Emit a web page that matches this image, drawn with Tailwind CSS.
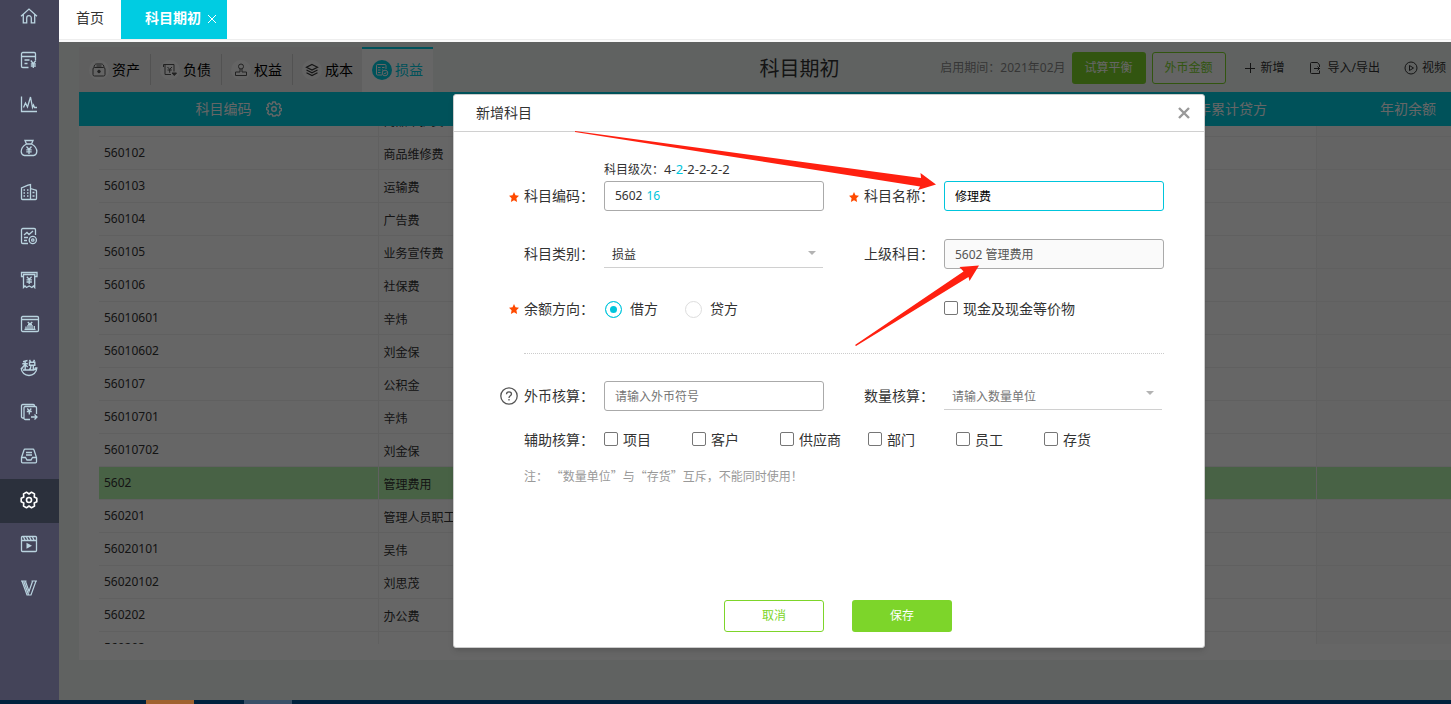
<!DOCTYPE html>
<html lang="zh-CN">
<head>
  <meta charset="UTF-8">
  <meta name="viewport" content="width=device-width, initial-scale=1.0">
  <title>科目期初</title>
  <script src="https://cdn.jsdelivr.net/npm/@tailwindcss/browser@4"></script>
</head>
<body class="h-screen flex flex-col overflow-hidden font-['Noto_Sans','Noto_Sans_CJK_SC',sans-serif] text-xs text-[#333]">
  <div class="flex flex-1 min-h-0">

    <!-- Sidebar -->
    <nav class="w-[59px] shrink-0 bg-[#444459] text-[#b9d3df] overflow-hidden">
      <a href="#" aria-label="首页" class="flex h-[39px] pb-2 pr-px items-center justify-center">
        <svg class="size-[18px]" viewBox="0 0 18 18" fill="none" stroke="currentColor" stroke-width="1.3"><path d="M1 9.2 9 2l8 7.2M3.3 7.5v8.3h3.4V11a2.3 2.3 0 0 1 4.6 0v4.800h3.400V7.500"/></svg>
      </a>
      <a href="#" aria-label="凭证" class="flex h-11 pb-0.5 pr-px items-center justify-center">
        <svg class="size-[18px]" viewBox="0 0 18 18" fill="none" stroke="currentColor" stroke-width="1.3"><path d="M8.500 16.500H2.800A1.300 1.300 0 0 1 1.500 15.200V2.800A1.300 1.300 0 0 1 2.800 1.500h11.400A1.300 1.300 0 0 1 15.500 2.800V9M1.500 5.500h14M4.500 9h5M4.500 12.500h3M10.800 9.500l2.500 3.200 2.500-3.200M13.300 12.700v4.300M10.800 13h5M10.800 15h5"/></svg>
      </a>
      <a href="#" aria-label="分析" class="flex h-11 pb-0.5 pr-px items-center justify-center">
        <svg class="size-[18px]" viewBox="0 0 18 18" fill="none" stroke="currentColor" stroke-width="1.3"><path d="M1.500 1.500v15h15.500M3.500 12.500l2-4.500 2 4 3-10 2 10.500 1-2.500 1 2.500h2.500"/></svg>
      </a>
      <a href="#" aria-label="资金" class="flex h-11 pb-0.5 pr-px items-center justify-center">
        <svg class="size-[18px]" viewBox="0 0 18 18" fill="none" stroke="currentColor" stroke-width="1.3"><path d="M5 1.500h8l-1.500 3.500h-5zM6.500 5C3 7 1 9.500 1.200 12.800c.2 2.500 1.500 3.500 3.300 3.700h9c1.800-.2 3.100-1.200 3.300-3.700C17 9.500 15 7 11.500 5M6.500 7.500 9 10.500l2.500-3M9 10.500v4.500M6.300 10.800h5.400M6.300 12.800h5.400"/></svg>
      </a>
      <a href="#" aria-label="资产" class="flex h-11 pb-0.5 pr-px items-center justify-center">
        <svg class="size-[18px]" viewBox="0 0 18 18" fill="none" stroke="currentColor" stroke-width="1.3"><path d="M10.500 16.500h-8a1 1 0 0 1-1-1V5L8 2.200l2.500-.7zM10.500 5.500l5 1.500a1 1 0 0 1 1 1v7.500a1 1 0 0 1-1 1h-5M3.500 7h1.500M7 7h1.500M3.500 10h1.500M7 10h1.500M3.500 13h1.500M7 13h1.500M12.500 9.500h2M12.500 13h2"/></svg>
      </a>
      <a href="#" aria-label="报表" class="flex h-11 pb-0.5 pr-px items-center justify-center">
        <svg class="size-[18px]" viewBox="0 0 18 18" fill="none" stroke="currentColor" stroke-width="1.3"><path d="M8 16.500H2.800a1.300 1.300 0 0 1-1.300-1.300V2.800a1.300 1.300 0 0 1 1.300-1.300h11.400a1.300 1.300 0 0 1 1.300 1.300V8M4 8l3-2.500 2 2L13 4M4 10.500h4M4 13.500h3"/><circle cx="12.800" cy="13" r="3.600"/><circle cx="12.800" cy="13" r="1.200"/></svg>
      </a>
      <a href="#" aria-label="发票" class="flex h-11 pb-0.5 pr-px items-center justify-center">
        <svg class="size-[18px]" viewBox="0 0 18 18" fill="none" stroke="currentColor" stroke-width="1.3"><path d="M3.500 5.500h-2v-4h15.500v4h-2M3 3.500h12.500M3.500 3.500v13l1.500-1.500 1.500 1.500 2.700-1.500 2.700 1.500 1.500-1.500 1.300 1.500v-13M6.800 5.800l2.400 2.500 2.400-2.500M9.200 8.300V13M6.500 8.800h5.400M6.500 11h5.400"/></svg>
      </a>
      <a href="#" aria-label="工资" class="flex h-11 pb-0.5 items-center justify-center">
        <svg class="w-5 h-[18px]" viewBox="0 0 20 18" fill="none" stroke="currentColor" stroke-width="1.3"><rect x="1.500" y="1.500" width="17" height="15" rx="1.200"/><path d="M1.500 4.500h17M4.500 14.300h11M6 14v-2.500M8 14v-4M12 14v-4M14.300 14v-3M10 14V9M7.700 7l2.300 2 2.300-2M8 9.500h4"/></svg>
      </a>
      <a href="#" aria-label="税务" class="flex h-11 pb-0.5 pr-px items-center justify-center">
        <svg class="size-[18px]" viewBox="0 0 18 18" fill="none" stroke="currentColor" stroke-width="1.4"><path d="M1.200 9c.2 4.800 3.800 7.500 7.800 7.500s7.600-2.700 7.800-7.500h-2M1.200 9h2M3 2.700l4.500-1.200M2.300 4.800h5.500M5.200 2v9.500M5 5.500 2.500 8.500M5.500 6l2.200 2M9.500.800l1 1.800M14.500.800l-1 1.800M9.500 3.300h5.300v3H9.500zM11 6.500c0 2-.5 3.700-2.200 4.700M13.300 6.500v3.700h2.500M3 11h11.500"/></svg>
      </a>
      <a href="#" aria-label="结账" class="flex h-11 pb-0.5 pr-px items-center justify-center">
        <svg class="size-[18px]" viewBox="0 0 18 18" fill="none" stroke="currentColor" stroke-width="1.3"><path d="M10 16.500H5.200A1.200 1.200 0 0 1 4 15.300V4.700a1.200 1.200 0 0 1 1.200-1.200h10.100a1.200 1.200 0 0 1 1.200 1.200V11M3.500 15H2.700a1.200 1.200 0 0 1-1.200-1.200V2.700a1.200 1.200 0 0 1 1.200-1.200h10.600a1.200 1.200 0 0 1 1.200 1.200v.8M7.300 5.500l2 2.500 2-2.500M9.300 8v3.500M6.800 8.500h5M11 14h6M14.500 11.500 17 14l-2.500 2.500"/></svg>
      </a>
      <a href="#" aria-label="归档" class="flex h-11 pb-0.5 pr-px items-center justify-center">
        <svg class="size-[18px]" viewBox="0 0 18 18" fill="none" stroke="currentColor" stroke-width="1.3"><path d="M1.500 10.500 4 3a1 1 0 0 1 1-.8h8a1 1 0 0 1 1 .8l2.500 7.500v4.300a1 1 0 0 1-1 1h-13a1 1 0 0 1-1-1zM1.500 10.500h4L7 13h4l1.500-2.500h4M6 5.500h6M6 8h6"/></svg>
      </a>
      <a href="#" aria-label="设置" class="flex h-11 pb-0.5 pr-px items-center justify-center bg-[#2b303c] text-white">
        <svg class="size-[18px]" viewBox="0 0 18 18" fill="none" stroke="currentColor" stroke-width="1.6" stroke-linejoin="round"><path d="M16.800 7.300v3.400L14.200 12l.3 3.100-3 1.700L9 15l-2.500 1.800-3-1.700.3-3.100-2.600-1.300V7.300L3.800 6l-.3-3.100 3-1.700L9 3l2.500-1.800 3 1.700-.3 3.100z"/><circle cx="9" cy="9" r="2.500"/></svg>
      </a>
      <a href="#" aria-label="教学视频" class="flex h-11 pb-0.5 pr-px items-center justify-center">
        <svg class="size-[18px]" viewBox="0 0 18 18" fill="none" stroke="currentColor" stroke-width="1.3"><rect x="1.500" y="1.500" width="15" height="15" rx="1"/><path d="M1.500 5.500h15M3.500 2l1.500 3M6.500 2 8 5M9.500 2 11 5M12.500 2 14 5"/><path d="M6.500 7.800v6l5.500-3z" fill="currentColor" stroke="none"/></svg>
      </a>
      <a href="#" aria-label="会员" class="flex h-11 pb-0.5 pr-px items-center justify-center">
        <svg class="size-[18px]" viewBox="0 0 18 18" fill="none" stroke="currentColor" stroke-width="1.2"><path d="M1 2h5.500M11.500 2H17M2 2l5 14h4l5-14M5.500 2.500 9 12.500l3.500-10M3.800 2.500l4.700 13"/></svg>
      </a>
    </nav>

    <div class="flex-1 min-w-0 flex flex-col">
      <!-- Page tabs -->
      <div class="flex h-[39px] bg-white text-sm">
        <a href="#" class="flex w-[62px] items-center justify-center pb-1">首页</a>
        <a href="#" class="flex w-[106px] items-center pl-6 pb-1 gap-1.5 bg-[#00cce2] text-white font-bold">科目期初
          <svg class="size-2.5 mt-0.5" viewBox="0 0 10 10" stroke="currentColor" stroke-width="1"><path d="M1 1l8 8M9 1 1 9"/></svg>
        </a>
      </div>
      <div class="h-[3px] bg-[#fafafa] border-t border-[#eee]"></div>

      <main class="relative flex-1 min-h-0 bg-[#f0f6f3]">
        <div class="absolute inset-0 overflow-hidden">
          <div class="min-w-[1481px] h-full flex flex-col px-5 pt-[5px] pb-10">
            <!-- Toolbar -->
            <div class="grid grid-cols-[1fr_auto_1fr] h-[45px] shrink-0">
              <div class="flex text-sm text-black">
                <a href="#" class="flex w-[71px] pl-2.5 gap-[3px] items-center bg-[#eee]">
                  <span class="size-5 rounded-full bg-[#fafafa] flex items-center justify-center text-[#555]"><svg class="size-3.5" viewBox="0 0 14 14" fill="none" stroke="currentColor"><rect x="1" y="4.500" width="12" height="8.500" rx="1.500"/><path d="M2 4.500c0-2 1-3.500 2.500-3.500h5c1.500 0 2.500 1.500 2.500 3.500M4.500 3h5"/><circle cx="7" cy="8.500" r="1.300" fill="currentColor"/></svg></span>
                  资产
                </a>
                <a href="#" class="flex w-[71px] pl-2.5 gap-[3px] items-center bg-[#eee] relative before:absolute before:left-0 before:h-[31px] before:w-px before:bg-[#ccc]">
                  <span class="size-5 rounded-full bg-[#fafafa] flex items-center justify-center text-[#555]"><svg class="size-3.5" viewBox="0 0 14 14" fill="none" stroke="currentColor"><path d="M.500 1.500H11v7M2 1.500v10h6M.500 4V1.500M4.500 4l2.200 2.300L9 4M6.700 6.300v3.500M4.500 7h4.300"/><path d="M9 10h4.500l-2.200 2.500z" fill="currentColor"/></svg></span>
                  负债
                </a>
                <a href="#" class="flex w-[71px] pl-2.5 gap-[3px] items-center bg-[#eee] relative before:absolute before:left-0 before:h-[31px] before:w-px before:bg-[#ccc]">
                  <span class="size-5 rounded-full bg-[#fafafa] flex items-center justify-center text-[#555]"><svg class="size-3.5" viewBox="0 0 14 14" fill="none" stroke="currentColor"><circle cx="7" cy="3.500" r="2.500"/><path d="M6 6v3H1.500v3.500h11V9H8V6"/></svg></span>
                  权益
                </a>
                <a href="#" class="flex w-[70px] pl-2.5 gap-[3px] items-center bg-[#eee] relative before:absolute before:left-0 before:h-[31px] before:w-px before:bg-[#ccc]">
                  <span class="size-5 rounded-full bg-[#fafafa] flex items-center justify-center text-[#333]"><svg class="size-3.5" viewBox="0 0 14 14" fill="none" stroke="currentColor" stroke-width="1.2"><path d="M7 1.500l5.500 2.800L7 7 1.500 4.300zM1.500 7 7 9.800 12.500 7M1.500 9.800 7 12.500l5.500-2.700"/></svg></span>
                  成本
                </a>
                <a href="#" class="flex w-[71px] pl-2.5 pb-0.5 gap-[3px] items-center bg-white border-t-2 border-[#00cce2] text-[#00cce2]">
                  <span class="size-5 rounded-full bg-[#00cce2] flex items-center justify-center text-white"><svg class="size-3.5" viewBox="0 0 14 14" fill="none" stroke="currentColor"><path d="M7 12H2.500a1 1 0 0 1-1-1V2.500a1 1 0 0 1 1-1H10a1 1 0 0 1 1 1V6M3 4.500h2.500M3 7h2.500M3 9.500h2.500M7 4.500h2.500M7 7h1"/><circle cx="10" cy="10" r="2.800"/><path d="M8.800 10l1 1 1.500-1.800"/></svg></span>
                  损益
                </a>
              </div>
              <h1 class="text-xl leading-[43px]">科目期初</h1>
              <div class="flex items-center justify-end pr-[74px] pb-1 whitespace-nowrap">
                <span class="text-[#888] mr-1.5">启用期间：2021年02月</span>
                <button class="w-[74px] h-8 rounded-[3px] bg-[#7dd52a] text-white mr-1.5">试算平衡</button>
                <button class="w-[74px] h-8 rounded-[3px] border border-[#7dd52a] bg-white/60 text-[#7dd52a] mr-[19px]">外币金额</button>
                <button class="flex items-center gap-1.5 mr-[25px]">
                  <svg class="size-2.5" viewBox="0 0 10 10" stroke="currentColor"><path d="M0 5.500h10M5.500 0v10"/></svg>新增
                </button>
                <button class="flex items-center gap-1.5 mr-6">
                  <svg class="size-3" viewBox="0 0 12 12" fill="none" stroke="currentColor"><path d="M9.500 5V3L7.500.500h-6a1 1 0 0 0-1 1v9a1 1 0 0 0 1 1h8v-3M4 6.500h6M7.500 4.500l2 2-2 2"/></svg>导入/导出
                </button>
                <button class="flex items-center gap-1">
                  <svg class="size-3.5" viewBox="0 0 14 14" fill="none" stroke="currentColor"><circle cx="7" cy="7" r="6"/><path d="M5.500 4.500v5L9.500 7z"/></svg>视频
                </button>
              </div>
            </div>

            <!-- Accounts table -->
            <div class="flex-1 min-h-0 flex flex-col bg-white pb-4">
              <div class="bg-[#00cce2] px-5 shrink-0">
                <table class="w-full table-fixed text-sm text-white">
                  <thead>
                    <tr class="h-[34px]">
                      <th class="w-[279px] font-normal">
                        <span class="flex items-center justify-center gap-3.5">科目编码
                          <svg class="size-4" viewBox="0 0 16 16" fill="none" stroke="currentColor" stroke-width="1.4" stroke-linejoin="round"><path d="M6.700 1h2.600l.5 1.900 1.300.6L12.800 2.500l1.700 1.800-1 1.700.5 1.200 1.500.4v2l-1.600.5-.5 1.300.9 1.700-1.700 1.700-1.700-1-1.300.6L9.300 15H6.700l-.4-1.600-1.300-.6-1.700 1-1.800-1.700 1-1.700-.5-1.300L.500 8.600v-2l1.500-.4.5-1.200-1-1.200L3.300 2l1.700 1.300 1.300-.5z"/><circle cx="8" cy="8" r="2.300"/></svg>
                        </span>
                      </th>
                      <th class="w-[210px] font-normal">科目名称</th>
                      <th class="w-[182px] font-normal">余额方向</th>
                      <th class="w-[182px] font-normal">期初余额</th>
                      <th class="w-[182px] font-normal">本年累计借方</th>
                      <th class="w-[182px] font-normal">本年累计贷方</th>
                      <th class="font-normal">年初余额</th>
                    </tr>
                  </thead>
                </table>
              </div>
              <div class="flex-1 min-h-0 overflow-hidden px-5">
                <table class="w-full table-fixed -mt-[23px]">
                  <colgroup>
                    <col class="w-[279px]"><col class="w-[210px]"><col class="w-[182px]"><col class="w-[182px]"><col class="w-[182px]"><col class="w-[182px]"><col>
                  </colgroup>
                  <tbody id="accounts"></tbody>
                </table>
              </div>
            </div>
          </div>
        </div>

        <div class="absolute inset-0 bg-black/60"></div>

        <!-- New account dialog -->
        <form role="dialog" aria-label="新增科目" class="absolute left-[394px] top-[52px] w-[752px] h-[554px] flex flex-col bg-white border border-[#ccc] rounded-[3px] shadow-md">
          <div class="flex h-[37px] shrink-0 items-center justify-between pl-[22px] pr-[14px] border-b border-[#d0d0d0] text-sm">
            <h2>新增科目</h2>
            <button type="button" aria-label="关闭">
              <svg class="size-3" viewBox="0 0 12 12" stroke="#999" stroke-width="2.4"><path d="M1 1l10 10M11 1 1 11"/></svg>
            </button>
          </div>

          <p class="mt-[27px] h-5 pl-[150px] leading-5">科目级次：<span class="text-[13px]">4-<span class="text-[#00c5dc]">2</span>-2-2-2-2</span></p>

          <div class="mt-0.5 grid grid-cols-[150px_220px_120px_220px] h-[30px] items-center">
            <label for="code" class="flex items-center justify-end gap-[5px] pr-2.5 text-sm">
              <svg class="size-2.5 mt-0.5" viewBox="0 0 10 10" fill="#ff4a00"><path d="M5 0l1.500 3.300L10 3.700 7.400 6.200 8.100 10 5 8.200 1.900 10l.7-3.800L0 3.700l3.500-.4z"/></svg>科目编码：
            </label>
            <div class="flex h-[30px] items-center gap-1 pl-2.5 border border-[#aaa] rounded-[3px]">
              <span>5602</span>
              <input id="code" value="16" class="w-40 text-[#00c5dc] outline-none">
            </div>
            <label for="name" class="flex items-center justify-end gap-[5px] pr-2.5 text-sm">
              <svg class="size-2.5 mt-0.5" viewBox="0 0 10 10" fill="#ff4a00"><path d="M5 0l1.500 3.300L10 3.700 7.400 6.200 8.100 10 5 8.200 1.900 10l.7-3.800L0 3.700l3.500-.4z"/></svg>科目名称：
            </label>
            <input id="name" value="修理费" class="h-[30px] px-2.5 border border-[#00c5dc] rounded-[3px] text-black outline-none">
          </div>

          <div class="mt-7 grid grid-cols-[150px_220px_120px_220px] h-[30px] items-center">
            <label for="category" class="text-right pr-2.5 text-sm">科目类别：</label>
            <div class="relative h-[30px]">
              <select id="category" class="appearance-none w-[219px] h-[29px] px-2 pt-[3px] border-b border-[#d0d0d0] outline-none">
                <option>损益</option>
              </select>
              <svg class="absolute right-2 top-3 w-2 h-1 pointer-events-none" viewBox="0 0 8 4" fill="#b3b3b3"><path d="M0 0h8L4 4z"/></svg>
            </div>
            <label for="parent" class="text-right pr-2.5 text-sm">上级科目：</label>
            <input id="parent" value="5602 管理费用" readonly class="h-[30px] px-2.5 border border-[#aaa] rounded-[3px] bg-[#fafafa] text-[#555] outline-none">
          </div>

          <div class="mt-[30px] grid grid-cols-[150px_220px_120px_220px] h-5 items-center text-sm">
            <span class="flex items-center justify-end gap-[5px] pr-2.5">
              <svg class="size-2.5" viewBox="0 0 10 10" fill="#ff4a00"><path d="M5 0l1.500 3.300L10 3.700 7.400 6.200 8.100 10 5 8.200 1.900 10l.7-3.800L0 3.700l3.500-.4z"/></svg>余额方向：
            </span>
            <div class="flex pl-px">
              <label class="flex w-20 items-center gap-2">
                <input type="radio" name="direction" checked class="appearance-none size-[17px] rounded-full border border-[#ddd] checked:border-[#00c5dc] checked:bg-[#00c5dc] checked:shadow-[inset_0_0_0_4px_white]">借方
              </label>
              <label class="flex items-center gap-2">
                <input type="radio" name="direction" class="appearance-none size-[17px] rounded-full border border-[#ddd] checked:border-[#00c5dc] checked:bg-[#00c5dc] checked:shadow-[inset_0_0_0_4px_white]">贷方
              </label>
            </div>
            <span></span>
            <label class="flex items-center gap-[5px]">
              <input type="checkbox" class="appearance-none size-3.5 mb-0.5 rounded-[2px] border border-[#767676] checked:bg-[#00c5dc]">现金及现金等价物
            </label>
          </div>

          <hr class="mt-[34px] ml-[70px] w-[640px] border-t border-dotted border-[#ccc]">

          <div class="mt-[27px] grid grid-cols-[150px_220px_120px_220px] h-[30px] items-center">
            <label for="currency" class="flex items-center justify-end gap-1.5 pr-2.5 text-sm">
              <svg class="size-[18px]" viewBox="0 0 18 18" fill="none" stroke="#555" stroke-width="1.3"><circle cx="9" cy="9" r="8.200"/><path d="M6.500 7.300C6.500 5.800 7.600 4.800 9 4.800s2.500.9 2.500 2.200c0 1.800-2.500 1.900-2.500 3.900M9 12v1.500"/></svg>外币核算：
            </label>
            <input id="currency" placeholder="请输入外币符号" class="h-[30px] px-2.5 border border-[#aaa] rounded-[3px] placeholder:text-[#757575] outline-none">
            <label for="unit" class="text-right pr-2.5 text-sm">数量核算：</label>
            <div class="relative h-[30px]">
              <select id="unit" class="appearance-none w-[218px] h-[29px] px-2 pt-[3px] border-b border-[#d0d0d0] text-[#757575] outline-none">
                <option>请输入数量单位</option>
              </select>
              <svg class="absolute right-2.5 top-2.5 w-2 h-1 pointer-events-none" viewBox="0 0 8 4" fill="#b3b3b3"><path d="M0 0h8L4 4z"/></svg>
            </div>
          </div>

          <div class="mt-[19px] flex h-5 items-center text-sm">
            <span class="w-[150px] text-right pr-2.5">辅助核算：</span>
            <label class="flex w-[88px] items-center gap-[5px]"><input type="checkbox" class="appearance-none size-3.5 mb-0.5 rounded-[2px] border border-[#767676] checked:bg-[#00c5dc]">项目</label>
            <label class="flex w-[88px] items-center gap-[5px]"><input type="checkbox" class="appearance-none size-3.5 mb-0.5 rounded-[2px] border border-[#767676] checked:bg-[#00c5dc]">客户</label>
            <label class="flex w-[88px] items-center gap-[5px]"><input type="checkbox" class="appearance-none size-3.5 mb-0.5 rounded-[2px] border border-[#767676] checked:bg-[#00c5dc]">供应商</label>
            <label class="flex w-[88px] items-center gap-[5px]"><input type="checkbox" class="appearance-none size-3.5 mb-0.5 rounded-[2px] border border-[#767676] checked:bg-[#00c5dc]">部门</label>
            <label class="flex w-[88px] items-center gap-[5px]"><input type="checkbox" class="appearance-none size-3.5 mb-0.5 rounded-[2px] border border-[#767676] checked:bg-[#00c5dc]">员工</label>
            <label class="flex w-[88px] items-center gap-[5px]"><input type="checkbox" class="appearance-none size-3.5 mb-0.5 rounded-[2px] border border-[#767676] checked:bg-[#00c5dc]">存货</label>
          </div>

          <p class="mt-4 pl-[70px] leading-5 text-[#999] font-['Noto_Sans_CJK_SC',sans-serif]">注： “数量单位”与“存货”互斥，不能同时使用！</p>

          <div class="mt-auto flex justify-center gap-7 pl-[18px] pb-[15px]">
            <button type="button" class="w-[100px] h-8 border border-[#7dd52a] rounded-[3px] text-[#7dd52a]">取消</button>
            <button type="button" class="w-[100px] h-8 rounded-[3px] bg-[#7dd52a] text-white">保存</button>
          </div>
        </form>

        <!-- Pointers to the name and parent fields, drawn over the dialog -->
        <svg class="absolute left-[516px] top-[89px] w-[410px] h-[216px] pointer-events-none" viewBox="575 131 410 216" fill="#ff2010">
          <path d="M575 131 921 178 920.500 173 936 184.500 918 190 920 186.500 575 132z"/>
          <path d="M855 345 963.500 271.500 959.500 267 979 265.500 969.500 281 968.500 277 856 346z"/>
        </svg>
      </main>
    </div>
  </div>

  <!-- Task strip -->
  <footer class="flex h-1 shrink-0 bg-[#00213d]">
    <span class="ml-[146px] w-12 bg-[#a0622f]"></span>
    <span class="ml-[50px] w-12 bg-[#3a5068]"></span>
  </footer>

  <script>
    const accounts = [
      ['560101', '商品维护费'], ['560102', '商品维修费'], ['560103', '运输费'], ['560104', '广告费'],
      ['560105', '业务宣传费'], ['560106', '社保费'], ['56010601', '辛炜'], ['56010602', '刘金保'],
      ['560107', '公积金'], ['56010701', '辛炜'], ['56010702', '刘金保'], ['5602', '管理费用'],
      ['560201', '管理人员职工薪酬'], ['56020101', '吴伟'], ['56020102', '刘思茂'], ['560202', '办公费'],
      ['560203', ''],
    ];

    document.getElementById('accounts').innerHTML = accounts.map(([code, name]) => `
      <tr class="h-[33px] border-b border-[#f0f0f0] ${code === '5602' ? 'bg-[#b4f5ac]' : ''}">
        <td class="pl-[5px] border-r border-[#f0f0f0]">${code}</td>
        <td class="pl-[5px] pt-[5px] whitespace-nowrap">${name}</td>
        <td></td>
        <td></td>
        <td></td>
        <td class="border-r border-[#f0f0f0]"></td>
        <td class="${code === '5602' ? '' : 'bg-[#fafafa]'}"></td>
      </tr>
    `).join('');
  </script>
</body>
</html>
